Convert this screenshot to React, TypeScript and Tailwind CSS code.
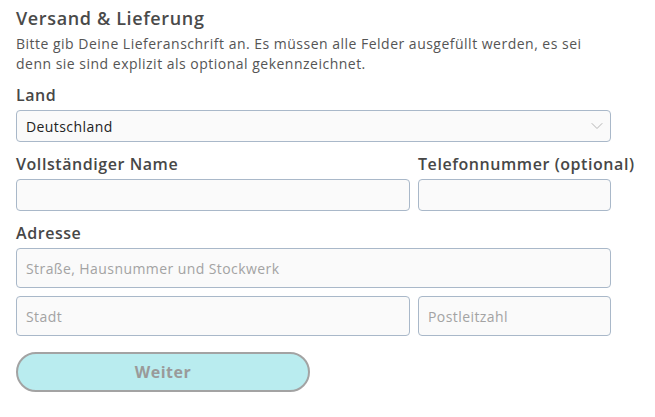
import { ChevronDown } from 'lucide-react';

const font = { fontFamily: '"Open Sans", "Noto Sans", Arial, sans-serif' };

function Label({ children }: { children: React.ReactNode }) {
  return <label className="block text-[16px] font-semibold leading-[22px] tracking-[0.035em] text-[#474747] whitespace-nowrap">{children}</label>;
}

function Field({ placeholder, className }: { placeholder?: string; className?: string }) {
  return (
    <input
      placeholder={placeholder}
      className={
        'w-full rounded-[4px] border border-[#a9b8c9] bg-[#fafafa] px-[9px] text-[14px] tracking-[0.03em] text-[#333] placeholder:text-[#a3a3a3] outline-none ' +
        (className ?? 'h-[32px]')
      }
    />
  );
}

export default function App() {
  return (
    <div className="bg-white px-4 pt-[5px] text-[#333]" style={font}>
      <h2 className="text-[18px] font-semibold leading-[26px] tracking-[0.035em] text-[#4a4a4a]">Versand &amp; Lieferung</h2>
      <p className="mt-[3px] w-[580px] text-[14px] leading-[20px] tracking-[0.035em] text-[#555]">
        Bitte gib Deine Lieferanschrift an. Es müssen alle Felder ausgefüllt werden, es sei denn sie sind explizit als optional gekennzeichnet.
      </p>

      <div className="mt-[10px]">
        <Label>Land</Label>
        <div className="relative mt-[4px] w-[595px]">
          <select className="h-[32px] w-full appearance-none rounded-[4px] border border-[#a9b8c9] bg-[#fafafa] px-[9px] text-[14px] tracking-[0.03em] text-[#222] outline-none">
            <option>Deutschland</option>
          </select>
          <ChevronDown className="pointer-events-none absolute right-[4px] top-[6px] h-[20px] w-[20px] text-[#b5b5b5]" strokeWidth={1.2} />
        </div>
      </div>

      <div className="mt-[11px] grid grid-cols-[394px_193px] gap-x-[8px]">
        <div>
          <Label>Vollständiger Name</Label>
          <div className="mt-[4px]"><Field /></div>
        </div>
        <div>
          <Label>Telefonnummer (optional)</Label>
          <div className="mt-[4px]"><Field /></div>
        </div>
      </div>

      <div className="mt-[11px] w-[595px]">
        <Label>Adresse</Label>
        <div className="mt-[4px]"><Field placeholder="Straße, Hausnummer und Stockwerk" className="h-[40px]" /></div>
        <div className="mt-[8px] grid grid-cols-[394px_193px] gap-x-[8px]">
          <Field placeholder="Stadt" className="h-[40px]" />
          <Field placeholder="Postleitzahl" className="h-[40px]" />
        </div>
      </div>

      <button className="mt-[16px] h-[40px] w-[294px] rounded-full border-2 border-[#a3a3a3] bg-[#b9ecef] text-[16px] font-bold tracking-[0.03em] text-[#9a9a9a]">
        Weiter
      </button>
    </div>
  );
}
